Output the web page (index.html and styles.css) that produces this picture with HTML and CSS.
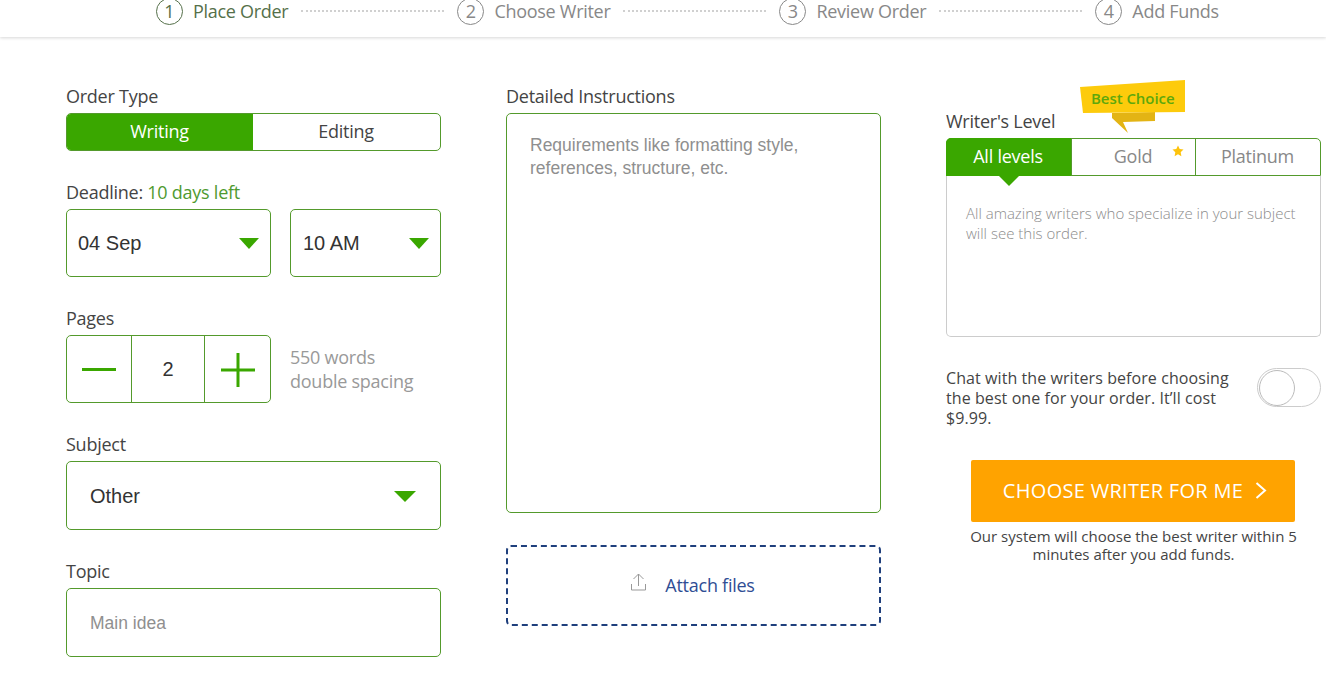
FILE: index.html
```html
<!DOCTYPE html>
<html lang="en">
<head>
<meta charset="utf-8">
<title>Place Order</title>
<link rel="stylesheet" href="styles.css">
</head>
<body>
<header class="steps">
  <div class="step active"><span class="num">1</span><span class="step-name">Place Order</span></div>
  <span class="dots"></span>
  <div class="step"><span class="num">2</span><span class="step-name">Choose Writer</span></div>
  <span class="dots"></span>
  <div class="step"><span class="num">3</span><span class="step-name">Review Order</span></div>
  <span class="dots"></span>
  <div class="step"><span class="num">4</span><span class="step-name">Add Funds</span></div>
</header>
<main class="layout">
  <section class="col">
    <div class="field">
      <div class="label">Order Type</div>
      <div class="switch">
        <div class="switch-item on">Writing</div>
        <div class="switch-item">Editing</div>
      </div>
    </div>
    <div class="field">
      <div class="label">Deadline: <span class="green">10 days left</span></div>
      <div class="row">
        <div class="select date"><span>04 Sep</span><i class="caret"></i></div>
        <div class="select time"><span>10 AM</span><i class="caret"></i></div>
      </div>
    </div>
    <div class="field">
      <div class="label">Pages</div>
      <div class="row">
        <div class="stepper">
          <div class="step-btn minus"><svg width="34" height="3" viewBox="0 0 34 3"><rect width="34" height="3" fill="#3aa700"/></svg></div>
          <div class="step-val">2</div>
          <div class="step-btn plus"><svg width="34" height="34" viewBox="0 0 34 34"><path d="M0 17h34M17 0v34" stroke="#3aa700" stroke-width="3" fill="none"/></svg></div>
        </div>
        <div class="hint">550 words<br>double spacing</div>
      </div>
    </div>
    <div class="field">
      <div class="label">Subject</div>
      <div class="select subject"><span>Other</span><i class="caret big"></i></div>
    </div>
    <div class="field">
      <div class="label">Topic</div>
      <input class="topic" type="text" placeholder="Main idea">
    </div>
  </section>
  <section class="col">
    <div class="label">Detailed Instructions</div>
    <textarea class="details" placeholder="Requirements like formatting style, references, structure, etc."></textarea>
    <div class="attach">
      <svg class="attach-icon" width="17" height="18" viewBox="0 0 17 18"><path d="M8.500 1v12M3.500 6l5-5 5 5M1.500 11v6h14v-6" fill="none" stroke="#999" stroke-width="1"/></svg>
      <span>Attach files</span>
    </div>
  </section>
  <section class="col col-right">
    <div class="ribbon">
      <svg width="106" height="53" viewBox="0 0 106 53">
        <path d="M32 33L75 32v9L43 42l5 11-16-15z" fill="#e3b414"/>
        <path d="M0 7L105 0v32L3 33z" fill="#fdcb0c"/>
      </svg>
      <span class="ribbon-text">Best Choice</span>
    </div>
    <div class="label">Writer's Level</div>
    <div class="tabs">
      <div class="tab on">All levels</div>
      <div class="tab">Gold<svg class="star" width="12" height="12" viewBox="0 0 24 24"><path d="M12 1l3.400 7.200 7.600 1-5.600 5.400 1.400 7.800L12 18.600 5.200 22.400l1.400-7.800L1 9.200l7.600-1z" fill="#fdc30c"/></svg></div>
      <div class="tab">Platinum</div>
    </div>
    <div class="panel">All amazing writers who specialize in your subject will see this order.</div>
    <div class="chat">
      <p class="chat-text">Chat with the writers before choosing the best one for your order. It’ll cost $9.99.</p>
      <div class="toggle"><span class="knob"></span></div>
    </div>
    <div class="cta">
      <span>CHOOSE WRITER FOR ME</span>
      <svg width="12" height="17" viewBox="0 0 12 17"><path d="M1.500 1L10 8.500 1.500 16" fill="none" stroke="#fff" stroke-width="2"/></svg>
    </div>
    <p class="note">Our system will choose the best writer within 5 minutes after you add funds.</p>
  </section>
</main>
</body>
</html>
```

FILE: styles.css
```css
* { box-sizing: border-box; }
html, body { margin: 0; padding: 0; background: #fff; }
body { font-family: "Open Sans", sans-serif; font-size: 18px; letter-spacing: -.25px; color: #444; overflow: hidden; height: 681px; }

.steps {
  display: flex; align-items: center; height: 37px; padding: 0 0 15px 156px;
  box-shadow: 0 1px 3px rgba(0,0,0,.16); overflow: hidden; background: #fff;
}
.step { display: flex; align-items: center; gap: 10px; color: #888; flex: none; }
.step.active { color: #55704a; }
.num {
  width: 27px; height: 27px; border: 1px solid currentColor; border-radius: 50%;
  display: flex; align-items: center; justify-content: center; font-size: 18px; line-height: 1; flex: none; letter-spacing: 0;
}
.step-name { font-size: 18px; line-height: 24px; white-space: nowrap; letter-spacing: -.29px; }
.dots { width: 143px; margin: 0 13px; border-top: 2px dotted #d0d0d0; flex: none; }

.layout { display: flex; gap: 65px; padding: 47px 0 0 66px; }
.col { width: 375px; flex: none; position: relative; }
.col-right { padding-top: 25px; }

.field { margin-bottom: 29px; }
.label { font-size: 18px; line-height: 24px; margin-bottom: 5px; color: #444; white-space: nowrap; }
.green { color: #4f9a30; }
.row { display: flex; gap: 19px; align-items: center; }

.switch { display: flex; height: 38px; border: 1px solid #549a2c; border-radius: 5px; overflow: hidden; }
.switch-item { flex: 1; display: flex; align-items: center; justify-content: center; color: #444; padding: 0 1px 2px 0; }
.switch-item.on { background: #3aa700; color: #fff; flex: none; width: 186px; }

.select {
  display: flex; align-items: center; justify-content: space-between;
  border: 1px solid #549a2c; border-radius: 5px; height: 68px;
  font-family: "Liberation Sans", Arial, sans-serif; font-size: 20px; letter-spacing: 0; color: #333;
}
.date { width: 205px; padding: 0 11px; }
.time { width: 151px; padding: 0 11px 0 12px; }
.subject { height: 69px; padding: 1px 24px 0 23px; }
.caret { width: 0; height: 0; border-left: 10px solid transparent; border-right: 10px solid transparent; border-top: 11px solid #3aa700; }
.caret.big { border-left-width: 11px; border-right-width: 11px; }

.stepper { display: flex; width: 205px; height: 68px; border: 1px solid #549a2c; border-radius: 5px; flex: none; }
.step-btn { width: 64px; display: flex; align-items: center; justify-content: center; }
.step-btn.plus { width: 65px; padding-top: 1px; }
.step-val {
  width: 74px; border-left: 1px solid #549a2c; border-right: 1px solid #549a2c;
  display: flex; align-items: center; justify-content: center;
  font-family: "Liberation Sans", Arial, sans-serif; font-size: 20px; letter-spacing: 0; color: #333;
}
.hint { color: #999; line-height: 24px; font-size: 18px; }

.topic {
  display: block; width: 100%; height: 69px; border: 1px solid #549a2c; border-radius: 5px;
  padding: 1px 23px 0; font-family: "Liberation Sans", Arial, sans-serif; font-size: 17.5px; letter-spacing: 0; color: #333; outline: none; background: #fff;
}
.topic::placeholder, .details::placeholder { color: #8f8f8f; opacity: 1; }

.details {
  display: block; width: 100%; height: 400px; border: 1px solid #549a2c; border-radius: 5px;
  padding: 20px 23px; font-family: "Liberation Sans", Arial, sans-serif; font-size: 17.5px; letter-spacing: 0; line-height: 23px;
  resize: none; outline: none; background: #fff; margin: 0;
}
.attach {
  margin-top: 32px; height: 81px; border: 2px dashed #1f3f7c; border-radius: 5px;
  display: flex; align-items: center; justify-content: center; gap: 18px; color: #2f4d94;
  padding: 0 2px 2px 0;
}
.attach-icon { margin-top: -5px; }

.ribbon { position: absolute; left: 134px; top: -4px; width: 106px; height: 53px; }
.ribbon svg { display: block; }
.ribbon-text {
  position: absolute; left: 11px; top: 8px; font-size: 15px; letter-spacing: -.05px; line-height: 20px; font-weight: 600;
  color: #5da80c; white-space: nowrap;
}

.tabs { display: flex; height: 38px; border: 1px solid #549a2c; border-radius: 5px 5px 0 0; position: relative; }
.tab {
  flex: 1; display: flex; align-items: center; justify-content: center; color: #888;
  border-left: 1px solid #549a2c; position: relative; padding: 0 1px 2px 0;
}
.tab:first-child { border-left: 0; }
.tab:nth-child(2) { flex: none; width: 124px; }
.tab.on { background: #3aa700; color: #fff; margin: -1px 0 -1px -1px; border-radius: 5px 0 0 0; flex: none; width: 125px; }
.tab.on::after {
  content: ""; position: absolute; left: 53px; top: 100%;
  border-left: 10px solid transparent; border-right: 10px solid transparent; border-top: 10px solid #3aa700;
}
.star { position: absolute; right: 11px; top: 6px; }
.panel {
  height: 161px; border: 1px solid #ccc; border-top: 0; border-radius: 0 0 5px 5px;
  padding: 27px 19px 0; font-size: 15px; letter-spacing: 0; line-height: 20px; font-weight: 300; color: #8c8c8c;
}
.chat { display: flex; align-items: flex-start; justify-content: space-between; margin-top: 31px; }
.chat-text { margin: 0; width: 300px; font-size: 16px; letter-spacing: .08px; line-height: 20px; color: #444; }
.toggle { display: flex; align-items: center; width: 64px; height: 39px; border: 1px solid #ccc; border-radius: 20px; padding: 0 1px; flex: none; background: #fff; }
.knob { display: block; width: 36px; height: 36px; border: 1px solid #bbb; border-radius: 50%; background: #fff; }

.cta {
  margin: 32px 26px 0 25px; height: 62px; background: #ffa300; border-radius: 2px; color: #fff;
  display: flex; align-items: center; justify-content: center; gap: 12px; font-size: 20px; letter-spacing: .3px; white-space: nowrap;
  padding: 0 0 2px 4px;
}
.note { margin: 5px 0 0; padding: 0 20px; font-size: 15px; letter-spacing: 0; line-height: 18px; text-align: center; color: #444; }
```
